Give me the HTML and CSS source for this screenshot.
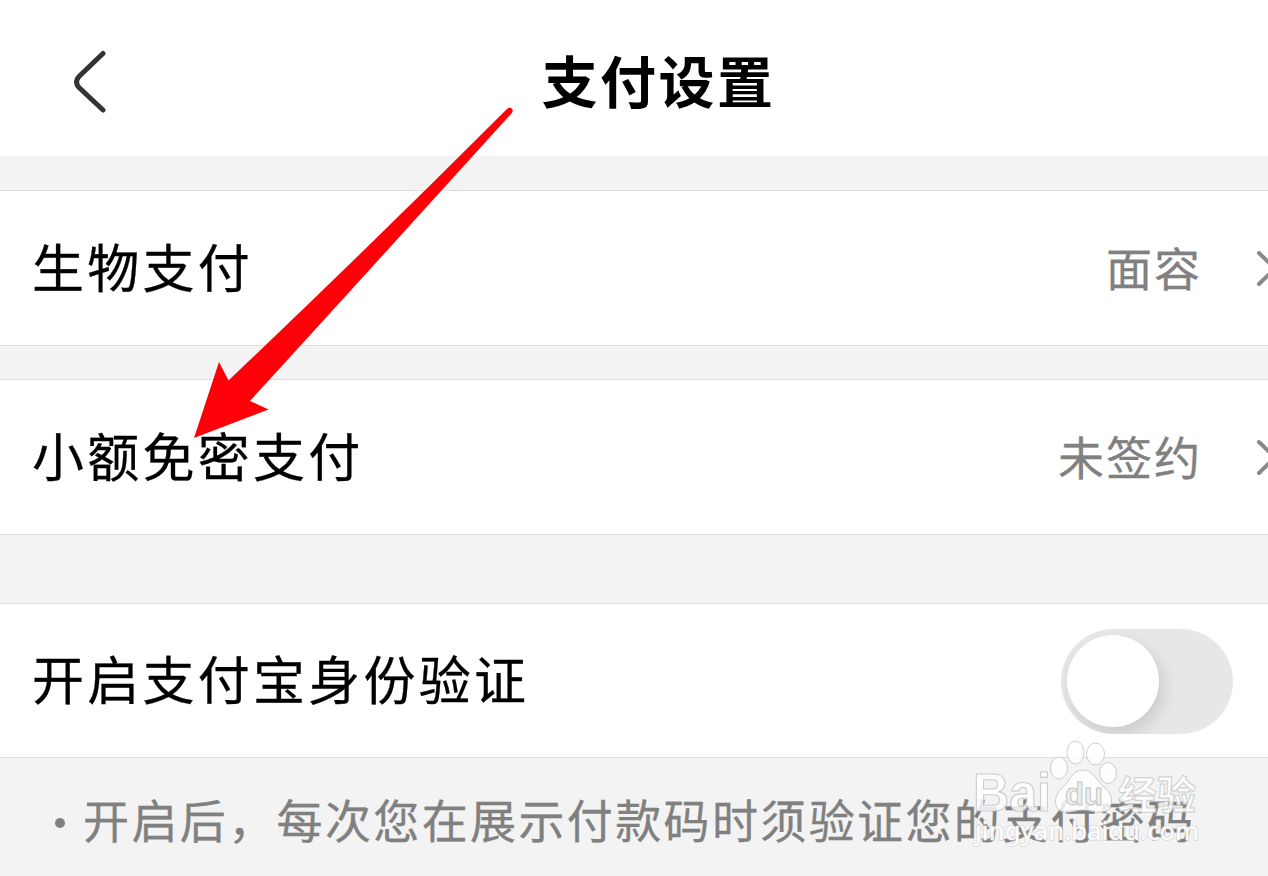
FILE: index.html
```html
<!DOCTYPE html>
<html lang="zh-CN">
<head>
    <meta charset="UTF-8">
    <meta name="viewport" content="width=device-width, initial-scale=1.0">
    <title>支付设置</title>
    <link rel="stylesheet" href="styles.css">
</head>
<body>
    <div class="page">
        <header class="header">
            <svg class="back" viewBox="0 0 36 68" fill="none">
                <path d="M31 5.500 L7 28.500 Q2 34 7 39.500 L31 62"/>
            </svg>
            <h1>支付设置</h1>
        </header>

        <div class="row">
            <span class="label">生物支付</span>
            <span class="value">面容</span>
            <svg class="chevron" viewBox="0 0 24 40" fill="none"><path d="M4 5 L20 20.500 L4 36"/></svg>
        </div>

        <div class="row">
            <span class="label">小额免密支付</span>
            <span class="value">未签约</span>
            <svg class="chevron" viewBox="0 0 24 40" fill="none"><path d="M4 5 L20 20.500 L4 36"/></svg>
        </div>

        <div class="row row-switch">
            <span class="label">开启支付宝身份验证</span>
            <div class="switch"><div class="knob"></div></div>
        </div>

        <p class="note"><span class="dot"></span>开启后，每次您在展示付款码时须验证您的支付密码</p>

        <!-- Arrow pointing at the second row -->
        <svg class="arrow" viewBox="0 0 330 340">
            <path d="M4 338 L29 262 L38.500 280.500 Q180 146 317 9 Q320 6 322 9 Q324 11 321 14 Q195 153 60 301 L78.500 309.500 Z"/>
        </svg>

        <svg class="watermark" viewBox="0 0 240 120">
            <g>
                <ellipse cx="99" cy="30" rx="8.500" ry="11"/>
                <ellipse cx="115.500" cy="14.500" rx="8.500" ry="11.500"/>
                <ellipse cx="135.500" cy="16" rx="9" ry="11"/>
                <ellipse cx="148" cy="35" rx="8.500" ry="10.500"/>
                <path d="M123 32 C134 32 136 43 145 50 C155 58 153 74 142 74 C134 75 130 72 123 72 C116 72 112 75 104 74 C93 72 93 58 102 50 C110 43 112 32 123 32 Z"/>
            </g>
            <text class="wm-brand" x="13" y="73" textLength="78" lengthAdjust="spacingAndGlyphs">Bai</text>
            <text class="wm-du" x="105" y="67" textLength="38" lengthAdjust="spacingAndGlyphs">du</text>
            <text class="wm-cn" x="158" y="71" textLength="78" lengthAdjust="spacingAndGlyphs">经验</text>
            <text class="wm-url" x="15" y="102" textLength="224" lengthAdjust="spacingAndGlyphs">jingyan.baidu.com</text>
        </svg>
    </div>
</body>
</html>
```

FILE: styles.css
```css
* {
    box-sizing: border-box;
}
body {
    margin: 0;
    background-color: #f3f3f3;
    color: #000;
    font-family: "Noto Sans CJK SC", sans-serif;
}
.page {
    position: relative;
    height: 876px;
    overflow: hidden;
}
.header {
    display: grid;
    grid-template-columns: 150px 1fr 150px;
    align-items: center;
    height: 156px;
    margin-bottom: 34px;
    padding-bottom: 8px;
    background-color: #fff;
}
.header h1 {
    margin: 0 0 0 49px;
    padding-top: 9px;
    font-size: 56px;
    line-height: 60px;
    font-weight: 700;
    letter-spacing: 2.4px;
    text-align: center;
}
.back {
    width: 36px;
    height: 68px;
    margin: 15px 0 0 72px;
    stroke: #333;
    stroke-width: 5;
    stroke-linecap: round;
}
.row {
    display: flex;
    align-items: center;
    height: 156px;
    margin-bottom: 33px;
    padding-left: 32px;
    background-color: #fff;
    border-top: 1px solid #dedede;
    border-bottom: 1px solid #e0e0e0;
}
.row-switch {
    height: 155px;
    margin-top: 68px;
    margin-bottom: 0;
    padding-right: 35px;
}
.label {
    flex: 1;
    padding-bottom: 5px;
    font-size: 52px;
    line-height: 60px;
    letter-spacing: 3.25px;
    -webkit-text-stroke: 0.3px #000;
}
.value {
    padding-bottom: 5px;
    color: #808080;
    font-size: 46px;
    line-height: 60px;
    letter-spacing: 2px;
    -webkit-text-stroke: 0.3px #808080;
}
.chevron {
    flex: none;
    width: 24px;
    height: 40px;
    margin: 0 -11px 0 53px;
    stroke: #888;
    stroke-width: 4;
    stroke-linecap: round;
}
.switch {
    width: 172px;
    height: 105px;
    margin-top: 2px;
    padding: 6px;
    border-radius: 53px;
    background-color: #e7e7e7;
    overflow: hidden;
}
.knob {
    width: 92px;
    height: 92px;
    border-radius: 50%;
    background-color: #fff;
    box-shadow: 4px 7px 16px rgba(0, 0, 0, 0.13);
}
.note {
    display: flex;
    align-items: center;
    margin: 0;
    padding: 30px 0 0 55px;
    color: #808080;
    font-size: 46px;
    line-height: 60px;
    letter-spacing: 2.38px;
    white-space: nowrap;
    -webkit-text-stroke: 0.3px #808080;
}
.dot {
    width: 10px;
    height: 10px;
    margin: 10px 18px 0 0;
    border-radius: 50%;
    background-color: #808080;
}
.arrow {
    position: absolute;
    left: 190px;
    top: 100px;
    width: 330px;
    height: 340px;
    fill: #ff0008;
}
.watermark {
    position: absolute;
    left: 960px;
    top: 738px;
    width: 240px;
    height: 120px;
    fill: rgba(255, 255, 255, 0.82);
    stroke: rgba(190, 190, 190, 0.75);
    stroke-width: 1;
}
.wm-brand {
    font-family: "Liberation Sans", sans-serif;
    font-size: 54px;
    font-weight: 700;
    stroke-width: 1.2;
}
.wm-du {
    font-family: "Liberation Sans", sans-serif;
    font-size: 32px;
    font-weight: 700;
    fill: #ededed;
    stroke: #c4c4c4;
    stroke-width: 1;
}
.wm-cn {
    font-size: 39px;
    font-weight: 700;
}
.wm-url {
    font-family: "Noto Sans", sans-serif;
    font-size: 26px;
    font-weight: 500;
    fill: rgba(255, 255, 255, 0.95);
    stroke: rgba(200, 200, 200, 0.6);
    stroke-width: 1.6;
    paint-order: stroke;
}
```
